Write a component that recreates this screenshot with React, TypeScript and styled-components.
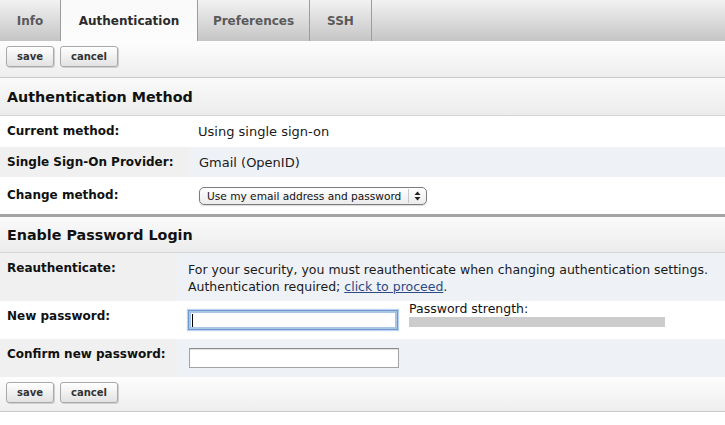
import React from "react";
import styled, { createGlobalStyle } from "styled-components";

const Global = createGlobalStyle`
  html, body { margin: 0; padding: 0; background: #ffffff; }
  body { font-family: "DejaVu Sans", "Liberation Sans", sans-serif; color: #1a1a1a; }
  * { box-sizing: border-box; }
`;

const Page = styled.div`
  width: 725px;
  display: flex;
  flex-direction: column;
`;

const TabBar = styled.div`
  display: flex;
  height: 41px;
  background: linear-gradient(#f2f2f2, #c5c5c5);
`;

const Tab = styled.div<{ $active?: boolean; $w: number }>`
  width: ${(p) => p.$w}px;
  display: flex;
  align-items: center;
  justify-content: center;
  font-size: 12px;
  font-weight: bold;
  color: ${(p) => (p.$active ? "#2b2b2b" : "#5a5a5a")};
  border-right: 1px solid #9c9c9c;
  background: ${(p) => (p.$active ? "linear-gradient(#f9f9f9, #fcfcfc)" : "linear-gradient(#f2f2f2, #c5c5c5)")};
`;

const ButtonBar = styled.div<{ $h: number }>`
  display: flex;
  gap: 6px;
  align-items: flex-start;
  height: ${(p) => p.$h}px;
  padding: 5px 6px 0;
  background: linear-gradient(#fdfdfd, #eeeeee);
  border-bottom: 1px solid #c9c9c9;
`;

const Button = styled.button`
  height: 21px;
  padding: 0 10px;
  font-family: "DejaVu Sans", "Liberation Sans", sans-serif;
  font-size: 10px;
  font-weight: bold;
  color: #333;
  background: linear-gradient(#ffffff, #e2e2e2);
  border: 1px solid #a9a9a9;
  border-radius: 3px;
  box-shadow: 1px 1px 0 #d0d0d0;
`;

const SectionHeader = styled.div<{ $h: number }>`
  height: ${(p) => p.$h}px;
  display: flex;
  align-items: center;
  padding-left: 7px;
  font-size: 14.3px;
  font-weight: bold;
  color: #111;
  background: linear-gradient(#fafafa, #ececec);
  border-bottom: 1px solid #d6d6d6;
`;

const Section = styled.section<{ $divider?: boolean }>`
  display: flex;
  flex-direction: column;
  border-top: ${(p) => (p.$divider ? "3px solid #a4a4a4" : "none")};
`;

const Row = styled.div<{ $split: number; $h: number; $alt?: boolean; $top?: boolean }>`
  display: grid;
  grid-template-columns: ${(p) => p.$split}px 1fr;
  min-height: ${(p) => p.$h}px;
  align-items: stretch;
  > div {
    display: flex;
    align-items: ${(p) => (p.$top ? "flex-start" : "center")};
    padding-top: ${(p) => (p.$top ? "8px" : "0")};
  }
  > div:first-child {
    background: ${(p) => (p.$alt ? "#f0f0f0" : "#ffffff")};
  }
  > div:last-child {
    background: ${(p) => (p.$alt ? "#eef1f6" : "#ffffff")};
  }
`;

const Label = styled.div`
  padding-left: 7px;
  font-size: 12px;
  font-weight: bold;
  line-height: 15px;
  color: #111;
`;

const Value = styled.div<{ $pl: number; $flush?: boolean }>`
  padding-left: ${(p) => p.$pl}px;
  font-size: 13px;
  line-height: 17px;
  color: #1a1a1a;
  && {
    padding-top: ${(p) => (p.$flush ? "0" : undefined)};
  }
`;

const TextBlock = styled.div`
  white-space: nowrap;
  font-size: 12.5px;
  line-height: 17px;
`;

const Link = styled.a`
  color: #2d4a84;
  text-decoration: underline;
`;

const SelectWrap = styled.div`
  position: relative;
  width: 228px;
  height: 18px;
`;

const Select = styled.select`
  appearance: none;
  -webkit-appearance: none;
  width: 100%;
  height: 100%;
  margin: 0;
  padding: 0 19px 0 7px;
  font-family: "DejaVu Sans", "Liberation Sans", sans-serif;
  font-size: 10.6px;
  color: #111;
  border: 1px solid #7c7c7c;
  border-radius: 5px;
  background: linear-gradient(#ffffff, #ececec);
  box-shadow: 0 1px 1px rgba(0, 0, 0, 0.15);
  outline: none;
`;

const SelectArrow = styled.span`
  position: absolute;
  top: 2px;
  right: 1px;
  bottom: 2px;
  width: 18px;
  border-left: 1px solid #c8c8c8;
  display: flex;
  align-items: center;
  justify-content: center;
  pointer-events: none;
`;

const FieldRow = styled.div`
  display: flex;
  align-items: flex-start;
  gap: 11px;
`;

const InputWrap = styled.div`
  position: relative;
  margin-top: 9px;
`;

const TextInput = styled.input<{ $focused?: boolean }>`
  display: block;
  width: 210px;
  height: 20px;
  margin: 0;
  padding: 0 3px;
  font-size: 13px;
  background: #fff;
  border: 1px solid ${(p) => (p.$focused ? "#6f98cf" : "#a3a3a3")};
  border-top-color: ${(p) => (p.$focused ? "#6f98cf" : "#8a8a8a")};
  box-shadow: ${(p) =>
    p.$focused ? "0 0 0 2px #a9c5e8 inset, 0 0 1px 1px #bcd3ee" : "inset 0 1px 1px rgba(0,0,0,0.12)"};
  outline: none;
`;

const Caret = styled.span`
  position: absolute;
  left: 4px;
  top: 4px;
  width: 1px;
  height: 13px;
  background: #000;
`;

const Strength = styled.div`
  display: flex;
  flex-direction: column;
  font-size: 12.5px;
  line-height: 16px;
  color: #111;
`;

const StrengthBar = styled.div`
  width: 256px;
  height: 10px;
  background: #cccccc;
`;

const UpDown = () => (
  <svg width="7" height="10" viewBox="0 0 7 10">
    <path d="M3.5 0.5 L6.5 4 L0.5 4 Z" fill="#222" />
    <path d="M3.5 9.5 L6.5 6 L0.5 6 Z" fill="#222" />
  </svg>
);

export default function App() {
  return (
    <>
      <Global />
      <Page>
        <TabBar>
          <Tab $w={61}>Info</Tab>
          <Tab $w={137} $active>
            Authentication
          </Tab>
          <Tab $w={112}>Preferences</Tab>
          <Tab $w={62}>SSH</Tab>
        </TabBar>
        <ButtonBar $h={37}>
          <Button>save</Button>
          <Button>cancel</Button>
        </ButtonBar>

        <Section>
          <SectionHeader $h={38}>Authentication Method</SectionHeader>
          <Row $split={189} $h={31}>
            <Label>Current method:</Label>
            <Value $pl={9}>Using single sign-on</Value>
          </Row>
          <Row $split={189} $h={30} $alt>
            <Label>Single Sign-On Provider:</Label>
            <Value $pl={10}>Gmail (OpenID)</Value>
          </Row>
          <Row $split={189} $h={37}>
            <Label>Change method:</Label>
            <Value $pl={10}>
              <SelectWrap>
                <Select defaultValue="email">
                  <option value="email">Use my email address and password</option>
                  <option value="sso">Use single sign-on</option>
                </Select>
                <SelectArrow>
                  <UpDown />
                </SelectArrow>
              </SelectWrap>
            </Value>
          </Row>
        </Section>

        <Section $divider>
          <SectionHeader $h={36}>Enable Password Login</SectionHeader>
          <Row $split={177} $h={48} $alt $top>
            <Label>Reauthenticate:</Label>
            <Value $pl={11}>
              <TextBlock>
                For your security, you must reauthenticate when changing authentication settings.
                <br />
                Authentication required; <Link href="#">click to proceed</Link>.
              </TextBlock>
            </Value>
          </Row>
          <Row $split={177} $h={38} $top>
            <Label>New password:</Label>
            <Value $pl={11} $flush>
              <FieldRow>
                <InputWrap>
                  <TextInput type="password" $focused />
                  <Caret />
                </InputWrap>
                <Strength>
                  Password strength:
                  <StrengthBar />
                </Strength>
              </FieldRow>
            </Value>
          </Row>
          <Row $split={177} $h={38} $alt $top>
            <Label>Confirm new password:</Label>
            <Value $pl={12} $flush>
              <InputWrap>
                <TextInput type="password" />
              </InputWrap>
            </Value>
          </Row>
        </Section>

        <ButtonBar $h={35}>
          <Button>save</Button>
          <Button>cancel</Button>
        </ButtonBar>
      </Page>
    </>
  );
}
